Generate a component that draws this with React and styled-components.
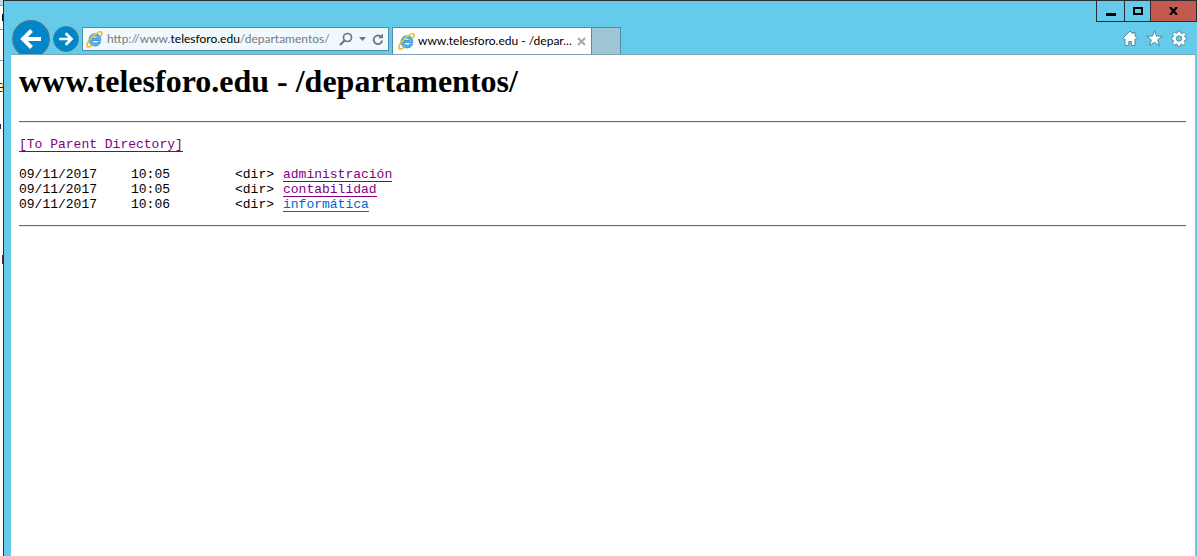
import React from "react";
import styled, { createGlobalStyle } from "styled-components";

const Global = createGlobalStyle`
  * { box-sizing: border-box; }
  html, body, #root { height: 100%; }
  body { margin: 0; overflow: hidden; background: #fff; font-family: Lato, "Open Sans", sans-serif; }
  button { padding: 0; border: 0; background: none; font: inherit; color: inherit; }
`;

const Desktop = styled.div`
  display: flex;
  min-height: 100vh;
`;

const Behind = styled.svg`
  flex: none;
  display: block;
  width: 3px;
  height: 280px;
`;

const Window = styled.div`
  flex: 1;
  min-width: 0;
  display: flex;
  flex-direction: column;
  border-left: 1px solid #2b2d33;
  border-top: 1px solid #2b2d33;
  padding: 0 2px 0 7px;
  background: #66caea;
`;

const Chrome = styled.header`
  display: flex;
  align-items: flex-end;
  height: 53px;
`;

const Navigation = styled.nav`
  display: flex;
  align-items: flex-end;
  gap: 3px;
  height: 34px;
  padding-left: 1px;
  overflow: hidden;
`;

const RoundButton = styled.button`
  flex: none;
  width: ${(p) => p.$size}px;
  height: ${(p) => p.$size}px;
  margin-bottom: ${(p) => p.$drop}px;
  svg { display: block; }
`;

const AddressBar = styled.form`
  display: flex;
  align-items: center;
  width: 307px;
  height: 24px;
  margin: 0 3px 3px 3px;
  padding: 0 1px 0 3px;
  border: 1px solid #4a90a8;
  background: #f0f9fd;
  svg { display: block; flex: none; }
`;

const AddressField = styled.label`
  position: relative;
  flex: 1;
  min-width: 0;
  margin-left: 4px;
  font-size: 12px;
  line-height: 20px;
  white-space: nowrap;
  color: #767b7e;
  b { font-weight: 400; color: #000; }
`;

const AddressInput = styled.input`
  position: absolute;
  inset: 0;
  width: 100%;
  border: 0;
  padding: 0;
  background: transparent;
  color: transparent;
  font: inherit;
  outline: 0;
`;

const BarButton = styled.button`
  width: ${(p) => p.$width}px;
  height: 20px;
  display: grid;
  place-items: center;
`;

const Tab = styled.div`
  display: flex;
  align-items: center;
  width: 200px;
  height: 27px;
  padding: 0 4px 0 5px;
  border: 1px solid #4a90a8;
  border-bottom: 0;
  background: #fff;
  svg { display: block; flex: none; }
`;

const TabTitle = styled.span`
  flex: 1;
  margin-left: 3px;
  font-size: 12px;
  line-height: 20px;
  white-space: nowrap;
  color: #000;
`;

const NewTab = styled.button`
  width: 29px;
  height: 27px;
  && {
    border: 1px solid #4a90a8;
    border-width: 1px 1px 0 0;
    background: #a0c6d6;
  }
`;

const Side = styled.div`
  flex: 1;
  align-self: stretch;
  display: flex;
  flex-direction: column;
  justify-content: space-between;
  align-items: flex-end;
  margin-right: -2px;
`;

const Captions = styled.div`
  display: flex;
  height: 21px;
  border: 1px solid #2b2d33;
  border-width: 0 0 1px 1px;
`;

const Caption = styled.button`
  display: grid;
  place-items: center;
  width: ${(p) => p.$width}px;
  height: 20px;
  && {
    background: ${(p) => p.$fill || "transparent"};
    border-right: 1px solid #2b2d33;
  }
`;

const Tools = styled.div`
  display: flex;
  gap: 8px;
  padding: 0 10px 7px 0;
  svg { display: block; }
`;

const Page = styled.main`
  flex: 1;
  padding: 10px 9px 0 8px;
  border-top: 1px solid #7fa3b8;
  background: #fff;
  font-family: "Liberation Mono", monospace;
  font-size: 13px;
  line-height: 15px;
  color: #000;
`;

const Title = styled.h1`
  margin: 0 0 24px;
  font: bold 32px/32px "Liberation Serif", serif;
`;

const Rule = styled.hr`
  margin: 0;
  border: 0;
  border-top: 1px solid #696969;
  border-bottom: 1px solid #ededed;
`;

const Parent = styled.p`
  margin: 14px 0 15px;
`;

const Link = styled.a`
  display: inline-block;
  height: 15px;
  border-bottom: 1px solid;
  text-decoration: none;
  color: ${(p) => (p.$fresh ? "#0066cc" : "#800080")};
`;

const Listing = styled.table`
  margin-bottom: 13px;
  border-collapse: collapse;
  td { padding: 0; height: 15px; vertical-align: top; }
`;

const Column = styled.col`
  width: ${(p) => p.$width}px;
`;

const Explorer = () => (
  <svg width="17" height="17" viewBox="0 0 17 17" aria-hidden="true">
    <path d="M14.8 9.400H6.200c.2 1.900 1.400 2.700 3.100 2.700 1.300 0 2-.4 2.500-1.200h2.800c-.8 2.600-2.800 4-5.400 4-3.700 0-6.100-2.400-6.100-6 0-3.700 2.400-6.100 6.100-6.100s5.800 2.500 5.600 6.600zM6.200 7.300h5.300c-.2-1.500-1.200-2.200-2.600-2.200s-2.400.7-2.700 2.200z" fill="#5cb9ea" stroke="#2482c4" strokeWidth=".8" />
    <path d="M15 5.200C16.400 2.600 16.200.8 14.500.8 11.600.8 6.300 4.700 3.400 8.900.9 12.400.2 15.600 1.900 16c1.200.3 3-.6 4.600-1.900" fill="none" stroke="#edb91c" strokeWidth="1.600" />
    <path d="M14.500 1.300C10.500 1.500 6 5.500 3.800 8.700" fill="none" stroke="#fbdc62" strokeWidth=".7" />
  </svg>
);

const Arrow = ({ size, flip }) => (
  <svg width={size} height={size} viewBox="0 0 38 38" aria-hidden="true">
    <circle cx="19" cy="19" r="18.300" fill="#0086c9" stroke="#44798d" strokeWidth="1.200" />
    <path transform={flip ? "rotate(180 19 19)" : undefined} d="M29 19H11M19.500 10.500L11 19l8.500 8.500" fill="none" stroke="#fff" strokeWidth="4" />
  </svg>
);

const rows = [
  ["09/11/2017", "10:05", "administración", false],
  ["09/11/2017", "10:05", "contabilidad", false],
  ["09/11/2017", "10:06", "informática", true],
];

export default function App() {
  return (
    <>
      <Global />
      <Desktop>
        <Behind viewBox="0 0 3 280" shapeRendering="crispEdges" aria-hidden="true">
          <path d="M0 0h3v5H0z" fill="#c4d8e0" />
          <path d="M0 5h3v1H0zM0 29h3v1H0zM0 60h3v1H0z" fill="#999" />
          <path d="M2 14h1v7H2z" fill="#000" />
          <path d="M2 83h1v9H2z" fill="#fdc14e" />
          <path d="M0 83h2v1H0zM0 87h3v1H0zM0 91h2v1H0z" fill="#222" />
          <path d="M0 124h1v5H0z" fill="#225" />
          <path d="M2 255h1v9H2z" fill="#702040" />
        </Behind>
        <Window>
          <Chrome>
            <Navigation aria-label="History">
              <RoundButton $size={38} $drop={-4} aria-label="Back"><Arrow size={38} /></RoundButton>
              <RoundButton $size={26} $drop={2} aria-label="Forward"><Arrow size={26} flip /></RoundButton>
            </Navigation>
            <AddressBar onSubmit={(e) => e.preventDefault()}>
              <Explorer />
              <AddressField>
                <span>http://www.<b>telesforo.edu</b>/departamentos/</span>
                <AddressInput aria-label="Address" />
              </AddressField>
              <BarButton $width={18} type="submit" aria-label="Search">
                <svg width="14" height="14" viewBox="0 0 14 14"><circle cx="8.500" cy="5.500" r="4" fill="none" stroke="#6f7678" strokeWidth="1.700" /><path d="M5.500 8.500L1 13" stroke="#6f7678" strokeWidth="2.200" /></svg>
              </BarButton>
              <BarButton $width={14} type="button" aria-label="Show address list">
                <svg width="7" height="4" viewBox="0 0 7 4"><path d="M0 0h7L3.500 4z" fill="#6f7678" /></svg>
              </BarButton>
              <BarButton $width={18} type="button" aria-label="Refresh">
                <svg width="12" height="13" viewBox="0 0 12 13"><path d="M8.500 3.300A4.300 4.300 0 1 0 10.200 7.500" fill="none" stroke="#6f7678" strokeWidth="1.800" /><path d="M6 5.300h5V.5z" fill="#6f7678" /></svg>
              </BarButton>
            </AddressBar>
            <Tab>
              <Explorer />
              <TabTitle>www.telesforo.edu - /depar...</TabTitle>
              <BarButton $width={12} aria-label="Close tab">
                <svg width="9" height="9" viewBox="0 0 9 9"><path d="M1 1l7 7M8 1L1 8" stroke="#a9a9a9" strokeWidth="2" /></svg>
              </BarButton>
            </Tab>
            <NewTab aria-label="New tab" />
            <Side>
              <Captions>
                <Caption $width={28} aria-label="Minimize"><svg width="10" height="12"><path d="M0 8h10v3H0z" /></svg></Caption>
                <Caption $width={26} aria-label="Maximize"><svg width="10" height="8"><path d="M1 1h8v6H1z" fill="none" stroke="#000" strokeWidth="2" /></svg></Caption>
                <Caption $width={46} $fill="#c35a50" aria-label="Close"><svg width="9" height="8"><path d="M1 0l7 8M8 0L1 8" stroke="#000" strokeWidth="2.200" /></svg></Caption>
              </Captions>
              <Tools>
                <button aria-label="Home"><svg width="16" height="17" viewBox="0 0 16 17"><path d="M8 1L.8 8.300 2 9.600l1-.8V15.500h3.800v-4h2.500v4H13V8.800l1 .8 1.200-1.300L13 6V2.500h-2.300v1.300z" fill="#fff" stroke="#4b8ca3" /></svg></button>
                <button aria-label="Favorites"><svg width="17" height="17" viewBox="0 0 17 17"><path d="M8.500.8l2 5.300 5.800.2-4.600 3.600 1.600 5.700-4.800-3.300-4.800 3.300 1.600-5.700L.7 6.300l5.800-.2z" fill="#fff" stroke="#4b8ca3" /></svg></button>
                <button aria-label="Tools"><svg width="16" height="17" viewBox="-8 -8.500 16 17"><g fill="#fff" stroke="#4b8ca3"><path d="M-1.500-7.500h3l.3 2 1.300.6 1.800-1.300 2 2-1.200 1.800.5 1 1.500.3v2.400l-1.800.4-.6 1.300 1.200 1.700-2.100 2.100-1.700-1.200-1 .5-.3 1.700h-2.800l-.3-1.700-1-.5-1.700 1.200-2.100-2.100 1.200-1.700-.6-1.300-1.700-.4v-2.500l1.700-.4.5-1.200-1.200-1.700 2-2 1.800 1.300 1.200-.5z" /><circle r="2.700" fill="#66caea" /></g></svg></button>
              </Tools>
            </Side>
          </Chrome>
          <Page>
            <Title>www.telesforo.edu - /departamentos/</Title>
            <Rule />
            <Parent><Link href="#parent">[To Parent Directory]</Link></Parent>
            <Listing>
              <colgroup><Column $width={112} /><Column $width={104} /><Column $width={48} /><Column /></colgroup>
              <tbody>
                {rows.map(([date, time, name, fresh]) => (
                  <tr key={name}>
                    <td>{date}</td><td>{time}</td><td>&lt;dir&gt;</td>
                    <td><Link href={"#" + name} $fresh={fresh}>{name}</Link></td>
                  </tr>
                ))}
              </tbody>
            </Listing>
            <Rule />
          </Page>
        </Window>
      </Desktop>
    </>
  );
}
